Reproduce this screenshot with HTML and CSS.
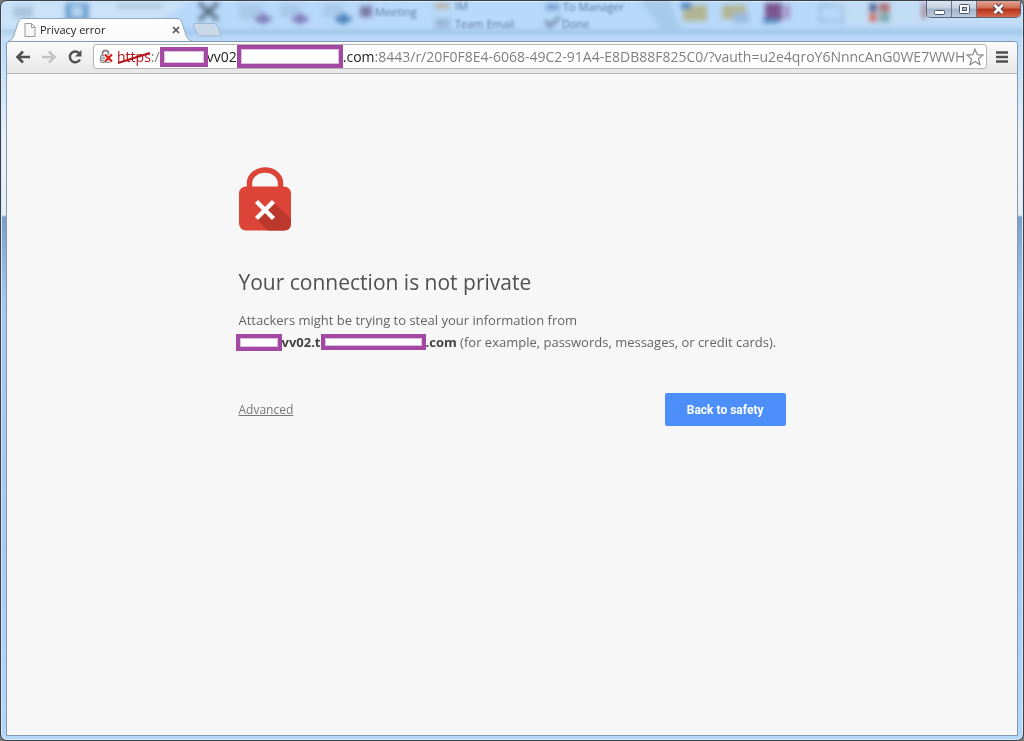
FILE: index.html
```html
<!DOCTYPE html>
<html lang="en">
<head>
  <meta charset="UTF-8">
  <meta name="viewport" content="width=device-width, initial-scale=1.0">
  <title>Privacy error</title>
  <link rel="stylesheet" href="styles.css">
</head>
<body>
  <div class="window">
    <!-- what shows through the glass title bar -->
    <svg class="glass" width="1024" height="41" aria-hidden="true">
      <defs>
        <filter id="soft" x="-5%" y="-50%" width="110%" height="200%"><feGaussianBlur stdDeviation="2.500"/></filter>
        <filter id="soft-text" x="-5%" y="-50%" width="110%" height="200%"><feGaussianBlur stdDeviation="1.200"/></filter>
      </defs>
      <g filter="url(#soft)">
        <path d="M0 0H190L120 41H0Z" fill="#d3e5f7" opacity=".7"/>
        <path d="M0 29H1024V33H0Z" fill="#8db5dc" opacity=".7"/>
        <path d="M640 0H668L680 28H660Z" fill="#a6c9ea"/>
        <path d="M830 0H1024V24H850Z" fill="#c9dff4" opacity=".6"/>
        <path d="M12 5H32V17H12Z" fill="#a8c4de"/>
        <path d="M64 2H88V20H64Z" fill="#5f9bd0"/>
        <path d="M70 5H82V16H70Z" fill="#b5d3ee"/>
        <path d="M116 3H162V8H116Z" fill="#b0c6de"/>
        <path d="M198 2L217 19M217 2L198 19" stroke="#56697f" stroke-width="4"/>
        <path d="M238 3H262V18H238ZM279 3H300V16H279ZM322 3H342V16H322Z" fill="#a9c9e8"/>
        <path d="M254 18H270M262 12V23M291 18H307M299 12V23" stroke="#7f75b9" stroke-width="5"/>
        <path d="M334 18H350M342 12V23" stroke="#407db7" stroke-width="5"/>
        <path d="M359 5H371V16H359Z" fill="#7d7aa5"/>
        <path d="M434 3H448V7H434Z" fill="#b9a784"/>
        <path d="M434 18H449V27H434Z" fill="#9ab7d5"/>
        <path d="M544 20L549 25L559 16" stroke="#5d7691" stroke-width="3" fill="none"/>
        <path d="M545 3H558V9H545Z" fill="#739ed0"/>
        <path d="M682 4H706V20H682ZM721 4H745V18H721Z" fill="#b2b593"/>
        <path d="M680 2H690V8H680Z" fill="#4381c0"/>
        <path d="M732 12H748V22H732Z" fill="#9bbbe0"/>
        <path d="M764 2H781V20H764Z" fill="#7a548e"/>
        <path d="M783 4H789V18H783Z" fill="#a391c2"/>
        <path d="M762 17H777V22H762Z" fill="#4d86bd"/>
        <path d="M819 5H842V20H819Z" fill="none" stroke="#94b5d6" stroke-width="2"/>
        <path d="M868 2H876V11H868Z" fill="#42618f"/>
        <path d="M878 2H889V11H878Z" fill="#b06a68"/>
        <path d="M868 12H876V21H868Z" fill="#d0705f"/>
        <path d="M878 12H889V21H878Z" fill="#7ba7ab"/>
        <path d="M921 2H925V18H921Z" fill="#a4646f"/>
      </g>
      <g class="glass-text" filter="url(#soft-text)">
        <text x="374" y="15">Meeting</text>
        <text x="454" y="9">IM</text>
        <text x="454" y="27">Team Email</text>
        <text x="562" y="10">To Manager</text>
        <text x="561" y="27">Done</text>
      </g>
    </svg>

    <header class="titlebar">
      <div class="tab">
        <svg class="tab-shape" width="184" height="23" viewBox="0 0 184 23" aria-hidden="true">
          <defs>
            <linearGradient id="tabfill" x1="0" y1="0" x2="0" y2="1">
              <stop offset="0" stop-color="#fff"/><stop offset="1" stop-color="#f8f8f8"/>
            </linearGradient>
          </defs>
          <path d="M0 23C4 22 5 20 6 17L10 5C11 2 12 .5 15 .5H169C172 .5 173 2 174 5L178 17C179 20 180 22 184 23Z" fill="url(#tabfill)"/>
          <path d="M0 23C4 22 5 20 6 17L10 5C11 2 12 .5 15 .5H169C172 .5 173 2 174 5L178 17C179 20 180 22 184 23" fill="none" stroke="#8fa8c2"/>
        </svg>
        <svg class="page-icon" width="12" height="14" viewBox="0 0 12 14" aria-hidden="true">
          <path d="M1 .5H7.500L11 4V13.500H1Z" fill="#fafafa" stroke="#999"/>
          <path d="M7.500 .5V4.500H11" fill="none" stroke="#999"/>
        </svg>
        <span class="tab-title">Privacy error</span>
        <button class="tab-close" aria-label="Close tab">
          <svg width="8" height="8" viewBox="0 0 8 8"><path d="M1 1L7 7M7 1L1 7" stroke="#555" stroke-width="1.700"/></svg>
        </button>
      </div>
      <button class="new-tab" aria-label="New tab">
        <svg width="30" height="14" viewBox="0 0 30 14">
          <path d="M3 .5H22Q24.500 .5 25.500 3L28.500 11Q29 13 27 13H9Q6.500 13 5.500 11L1.500 3Q1 .5 3 .5Z" fill="#c9d9e7" stroke="#9fb8d0"/>
        </svg>
      </button>
      <div class="window-buttons">
        <button class="win-btn" aria-label="Minimize">
          <svg width="13" height="12" viewBox="0 0 13 12"><rect x="1.500" y="7.500" width="10" height="4" rx="1" fill="#fff" stroke="#4d5870"/></svg>
        </button>
        <button class="win-btn" aria-label="Maximize">
          <svg width="13" height="12" viewBox="0 0 13 12"><rect x="1.500" y="1.500" width="10" height="9" rx="1" fill="#fff" stroke="#4d5870"/><rect x="4.500" y="4.500" width="4" height="3" fill="#a9bcd3" stroke="#4d5870"/></svg>
        </button>
        <button class="win-btn win-close" aria-label="Close">
          <svg width="13" height="12" viewBox="0 0 13 12"><path d="M2.500 2L10.500 10M10.500 2L2.500 10" stroke="#4f4354" stroke-width="4.600"/><path d="M2.500 2L10.500 10M10.500 2L2.500 10" stroke="#fff" stroke-width="2.600"/></svg>
        </button>
      </div>
    </header>

    <div class="browser">
      <nav class="toolbar">
        <button class="tool" aria-label="Back">
          <svg width="16" height="14" viewBox="0 0 16 14"><path d="M15 7H3M8 1.500L2.500 7L8 12.500" fill="none" stroke="#505050" stroke-width="2.600"/></svg>
        </button>
        <button class="tool" aria-label="Forward">
          <svg width="16" height="14" viewBox="0 0 16 14"><path d="M1 7H13M8 1.500L13.500 7L8 12.500" fill="none" stroke="#c4c4c4" stroke-width="2.600"/></svg>
        </button>
        <button class="tool" aria-label="Reload">
          <svg width="16" height="16" viewBox="0 0 16 16"><path d="M12.500 4.500A5.400 5.400 0 1 0 13 10.500" fill="none" stroke="#505050" stroke-width="2.400"/><path d="M14.500 1V7.500H8Z" fill="#505050"/></svg>
        </button>
        <div class="omnibox">
          <svg class="ssl-icon" width="15" height="16" viewBox="0 0 15 16" aria-hidden="true">
            <path d="M3.500 7V4.500A3 3 0 0 1 9.500 4.500V7" fill="none" stroke="#8a8a8a" stroke-width="1.800"/>
            <rect x="1.500" y="6.500" width="10" height="7" rx="1" fill="#d0d0d0" stroke="#888"/>
            <path d="M2 9H11M2 11.500H11" stroke="#999"/>
            <path d="M6 5.500L13 12.500M13 5.500L6 12.500" stroke="#fff" stroke-width="3.400"/>
            <path d="M6 5.500L13 12.500M13 5.500L6 12.500" stroke="#d8130e" stroke-width="2"/>
          </svg>
          <span class="scheme">https<svg class="strike" viewBox="0 0 34 14" aria-hidden="true"><path d="M1 12L33 2" stroke="#b3151a" stroke-width="2"/></svg></span><span class="muted">://</span>
          <span class="redacted host-start"></span><span>vv02</span><span class="redacted host-middle"></span><label for="url">.com</label>
          <input id="url" type="text" value=":8443/r/20F0F8E4-6068-49C2-91A4-E8DB88F825C0/?vauth=u2e4qroY6NnncAnG0WE7WWHqPz">
          <button class="star" aria-label="Bookmark this page">
            <svg width="18" height="18" viewBox="0 0 18 18"><path d="M9 1.200L11.200 6.700L17 7.100L12.500 10.900L14 16.700L9 13.500L4 16.700L5.500 10.900L1 7.100L6.800 6.700Z" fill="#fff" stroke="#888" stroke-width="1.200"/></svg>
          </button>
        </div>
        <button class="menu" aria-label="Menu">
          <svg width="12" height="12" viewBox="0 0 12 12"><path d="M0 1.500H12M0 6H12M0 10.500H12" stroke="#505050" stroke-width="2.600"/></svg>
        </button>
      </nav>

      <main class="page">
        <div class="interstitial">
          <svg class="lock" width="52" height="64" viewBox="0 0 52 64" role="img" aria-label="Not secure">
            <path d="M10.500 21V16A15.500 13 0 0 1 41.500 16V21" fill="none" stroke="#db4437" stroke-width="5.400"/>
            <rect width="52" height="44" y="19.500" rx="7" fill="#db4437"/>
            <path d="M35 36L52 52V56.500Q52 63.500 45 63.500H29L17 51.500Z" fill="#bc382d"/>
            <path d="M17.500 34.500L34.500 51.500M34.500 34.500L17.500 51.500" stroke="#fff" stroke-width="4.400"/>
          </svg>
          <h1>Your connection is not private</h1>
          <p>Attackers might be trying to steal your information from<br>
            <strong><span class="redacted site-start"></span>vv02.t<span class="redacted site-middle"></span>.com</strong> (for example, passwords, messages, or credit cards).</p>
          <div class="actions">
            <a class="advanced" href="#">Advanced</a>
            <button class="safety">Back to safety</button>
          </div>
        </div>
      </main>
    </div>
  </div>
</body>
</html>
```

FILE: styles.css
```css
* {
  box-sizing: border-box;
}
body {
  margin: 0;
  background: #777;
  font-family: "Open Sans", "Noto Sans", sans-serif;
}
button {
  display: flex;
  align-items: center;
  justify-content: center;
  padding: 0;
  border: 0;
  background: none;
}
.window {
  position: relative;
  display: flex;
  flex-direction: column;
  min-height: 100vh;
  padding: 0 5px 4px;
  border: 1px solid #3a4049;
  border-radius: 7px;
  background: linear-gradient(#b7d9fb 0, #b9d9f8 40px, #edf3fa 140px, #e6eef8 214px, #7d9fc6 216px, #a6c8ee 300px, #a9cbf0 550px, #b5d7fa 100%);
  box-shadow: inset 0 0 0 1px #dcebfa;
  overflow: hidden;
}
.glass {
  position: absolute;
  top: 0;
  left: 0;
}
.glass-text {
  font-size: 11px;
  fill: #5d7c9e;
}

/* title bar */
.titlebar {
  position: relative;
  display: flex;
  align-items: flex-end;
  height: 40px;
  padding-left: 2px;
}
.tab {
  position: relative;
  display: flex;
  align-items: center;
  width: 184px;
  height: 23px;
  padding: 0 9px 0 16px;
}
.tab-shape {
  position: absolute;
  top: 0;
  left: 0;
}
.page-icon {
  position: relative;
}
.tab-title {
  position: relative;
  flex: 1;
  margin-left: 4px;
  font-size: 11px;
  line-height: 16px;
  color: #222;
}
.tab-close {
  position: relative;
  width: 14px;
  height: 14px;
}
.new-tab {
  height: 18px;
  align-items: flex-start;
}
.window-buttons {
  display: flex;
  align-self: flex-start;
  margin-left: auto;
  margin-right: -3px;
  border: 1px solid #566478;
  border-top: 0;
  border-radius: 0 0 5px 5px;
  overflow: hidden;
}
.win-btn {
  width: 25px;
  height: 16px;
  border-right: 1px solid #66768c;
  background: linear-gradient(#dde6f0 0, #c3d0e0 45%, #9fb2ca 50%, #bccde0 100%);
}
.win-close {
  width: 43px;
  border-right: 0;
  background: linear-gradient(#e3a494 0, #cf6a52 45%, #b8301a 50%, #d7694a 100%);
}

/* browser frame */
.browser {
  position: relative;
  flex: 1;
  display: flex;
  flex-direction: column;
  border: 1px solid #8299b3;
  border-radius: 4px 4px 0 0;
  background: #f7f7f7;
}
.toolbar {
  display: flex;
  align-items: center;
  height: 32px;
  padding: 0 9px 2px 7px;
  border-bottom: 1px solid #b8b8b8;
  border-radius: 4px 4px 0 0;
  background: linear-gradient(#fafafa, #e8e8e8);
}
.tool {
  width: 18px;
  height: 24px;
  margin-right: 8px;
}
.omnibox {
  flex: 1;
  display: flex;
  align-items: center;
  min-width: 0;
  height: 25px;
  margin-left: 1px;
  padding-left: 5px;
  border: 1px solid #b5b5b5;
  border-radius: 3px;
  background: #fff;
  font-size: 14px;
  line-height: 20px;
  color: #222;
  white-space: nowrap;
}
.ssl-icon {
  flex: none;
  margin-right: 3px;
}
.scheme {
  position: relative;
  color: #b3151a;
}
.strike {
  position: absolute;
  top: 4px;
  left: 0;
  width: 100%;
  height: 14px;
}
.muted {
  color: #808080;
}
.redacted {
  display: inline-block;
  position: relative;
  flex: none;
  border: 4px solid #a349a4;
  background: #fff;
  box-shadow: inset 0 0 0 1px #dcbfdd;
}
.host-start {
  width: 48px;
  height: 20px;
  margin-left: -5px;
  margin-right: -1px;
}
.host-middle {
  width: 106px;
  height: 23px;
}
#url {
  flex: 1;
  min-width: 0;
  padding: 0;
  border: 0;
  outline: 0;
  background: none;
  font: inherit;
  color: #808080;
}
.star {
  width: 22px;
  height: 22px;
}
.menu {
  width: 12px;
  height: 24px;
  margin-left: 9px;
}

/* warning page */
.page {
  flex: 1;
  padding: 93px 24px 24px;
}
.interstitial {
  max-width: 547px;
  margin: 0 auto;
  color: #646464;
}
.lock {
  display: block;
}
h1 {
  margin: 35px 0 11px;
  font-size: 21px;
  line-height: 32px;
  font-weight: 400;
  color: #505050;
}
p {
  margin: 0;
  font-size: 13px;
  line-height: 22px;
}
strong {
  color: #444;
}
.site-start {
  width: 46px;
  height: 17px;
  margin-left: -3px;
  vertical-align: -4px;
}
.site-middle {
  width: 105px;
  height: 16px;
  vertical-align: -3px;
}
.actions {
  display: flex;
  align-items: center;
  justify-content: space-between;
  margin-top: 40px;
}
.advanced {
  font-size: 12px;
  line-height: 18px;
  color: #777;
}
.safety {
  height: 33px;
  padding: 0 22px;
  border-radius: 2px;
  background: #4c8efa;
  font-family: Roboto, "Liberation Sans", sans-serif;
  font-size: 12px;
  font-weight: 700;
  color: #fff;
}
```
